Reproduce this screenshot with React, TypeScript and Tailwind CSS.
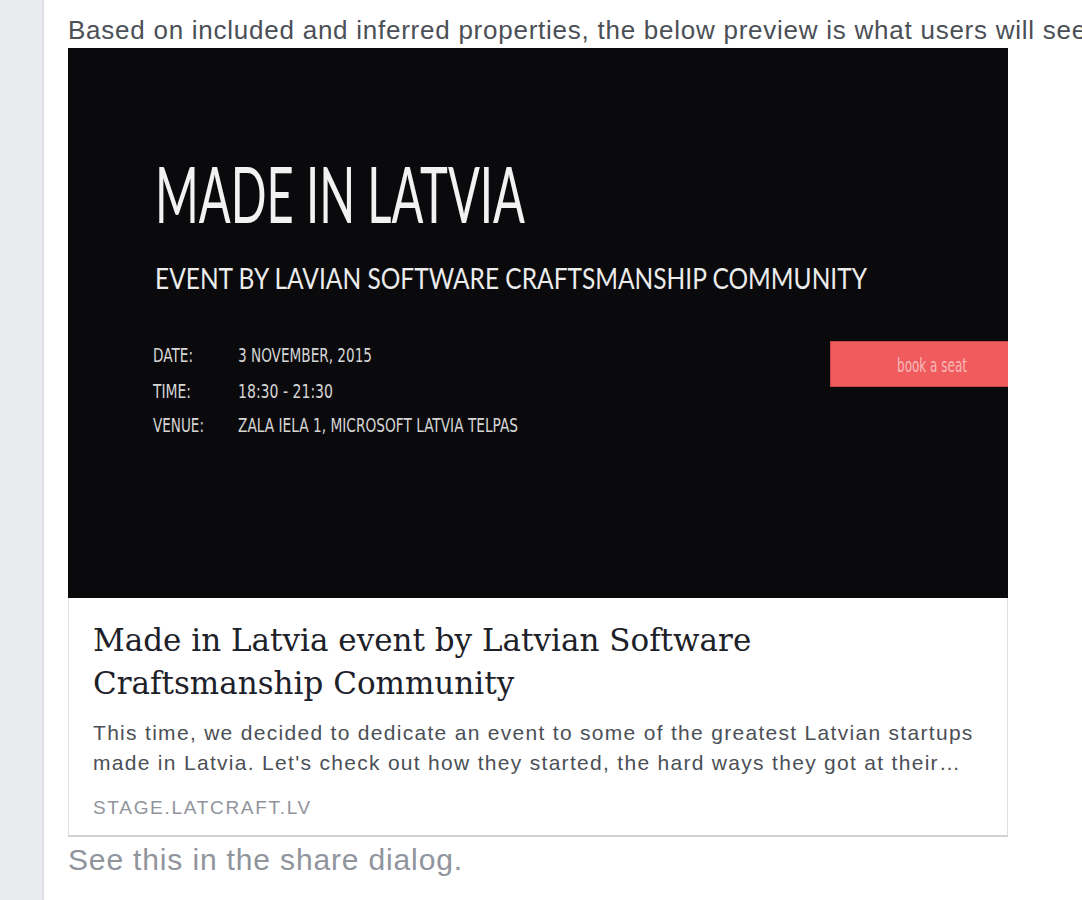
import React from "react";

const sans = { fontFamily: '"Liberation Sans", Arial, sans-serif' };

const EventImage: React.FC = () => {
  const cond = '"DejaVu Sans Condensed", "Lato", sans-serif';
  const details = [
    { label: "DATE:", lw: 40, value: "3 NOVEMBER, 2015", vw: 134, y: 314 },
    { label: "TIME:", lw: 38, value: "18:30 - 21:30", vw: 95, y: 350 },
    { label: "VENUE:", lw: 51, value: "ZALA IELA 1, MICROSOFT LATVIA TELPAS", vw: 280, y: 384 },
  ];

  return (
    <svg width="940" height="550" viewBox="0 0 940 550" className="block">
      <rect width="940" height="550" fill="#0a0a0c" />
      <text
        x="87"
        y="175"
        fill="#f2f2f2"
        fontFamily='"Lato", sans-serif'
        fontWeight={400}
        fontSize="78"
        textLength="370"
        lengthAdjust="spacingAndGlyphs"
      >
        MADE IN LATVIA
      </text>
      <text
        x="87"
        y="241"
        fill="#ececec"
        fontFamily='"Lato", sans-serif'
        fontWeight={400}
        fontSize="29"
        textLength="712"
        lengthAdjust="spacingAndGlyphs"
      >
        EVENT BY LAVIAN SOFTWARE CRAFTSMANSHIP COMMUNITY
      </text>
      {details.map((d) => (
        <g key={d.label} fill="#d6d6d6" fontFamily={cond} fontSize="19">
          <text x="85" y={d.y} textLength={d.lw} lengthAdjust="spacingAndGlyphs">
            {d.label}
          </text>
          <text x="170" y={d.y} textLength={d.vw} lengthAdjust="spacingAndGlyphs">
            {d.value}
          </text>
        </g>
      ))}
      <rect x="762.5" y="293.5" width="180" height="45" fill="#f05b5e" stroke="#c9484b" />
      <text
        x="829"
        y="324"
        fill="#f8b9ba"
        fontFamily={cond}
        fontSize="20"
        textLength="70"
        lengthAdjust="spacingAndGlyphs"
      >
        book a seat
      </text>
    </svg>
  );
};

export default function App() {
  return (
    <div className="flex min-h-screen w-[1082px] overflow-hidden bg-white">
      <div className="w-[44px] shrink-0 bg-[#e9ebee] border-r-2 border-[#dddfe2]" />
      <div className="min-w-0 flex-1 pl-6 pt-[15px]">
        <p
          className="whitespace-nowrap text-[26px] leading-[30px] tracking-[0.75px] text-[#4b4f56]"
          style={sans}
        >
          Based on included and inferred properties, the below preview is what users will see.
        </p>
        <div className="mt-[3px] w-[940px]">
          <EventImage />
          <div className="border-x border-b-2 border-x-[#dddfe2] border-b-[#d0d1d5] px-6 pt-[21px] pb-[16px]">
            <h2
              className="text-[31px] leading-[43px] text-[#1d2129]"
              style={{ fontFamily: '"DejaVu Serif", Georgia, serif' }}
            >
              Made in Latvia event by Latvian Software
              <br />
              Craftsmanship Community
            </h2>
            <p
              className="mt-[13px] whitespace-nowrap text-[21px] leading-[30px] tracking-[1.3px] text-[#4b4f56]"
              style={sans}
            >
              This time, we decided to dedicate an event to some of the greatest Latvian startups
              <br />
              made in Latvia. Let's check out how they started, the hard ways they got at their…
            </p>
            <p
              className="mt-[19px] text-[19px] leading-[22px] tracking-[1.7px] uppercase text-[#90949c]"
              style={sans}
            >
              stage.latcraft.lv
            </p>
          </div>
        </div>
        <p
          className="mt-[5px] text-[30px] leading-[36px] tracking-[0.85px] text-[#90949c]"
          style={sans}
        >
          See this in the share dialog.
        </p>
      </div>
    </div>
  );
}
